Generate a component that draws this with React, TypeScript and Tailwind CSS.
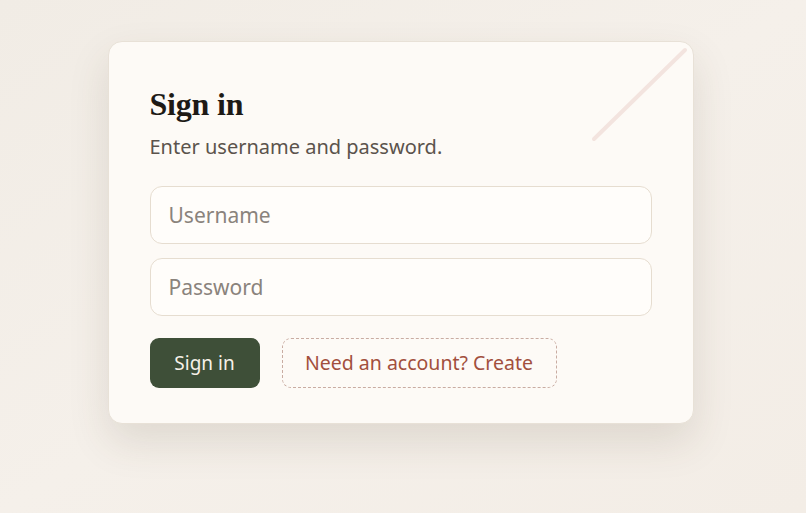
export default function App() {
  return (
    <div className="min-h-[513px] w-full bg-gradient-to-br from-[#f1ece5] via-[#f5f0ea] to-[#f3ede6] flex justify-center pt-[41px] pr-[5px] font-['Noto_Sans',sans-serif]">
      <div className="relative w-[586px] shrink-0 h-[383px] bg-[#fdfaf6] border border-[#e8e1d7] rounded-[14px] shadow-[0_18px_40px_rgba(80,60,40,0.13)] px-[41px] pt-[42px] overflow-hidden">
        <svg
          className="absolute right-[3px] top-[4px] pointer-events-none"
          width="100"
          height="100"
          viewBox="0 0 100 100"
        >
          <line x1="4" y1="93" x2="95" y2="4" stroke="#f3e4df" strokeWidth="4" strokeLinecap="round" />
        </svg>
        <h1 className="font-['Liberation_Serif',serif] font-bold text-[32px] leading-[40px] text-[#1e1a16] tracking-[-0.2px]">
          Sign in
        </h1>
        <p className="mt-[9px] text-[20px] leading-[28px] text-[#5b534c]">Enter username and password.</p>
        <form className="mt-[25px] flex flex-col gap-[14px]" onSubmit={(e) => e.preventDefault()}>
          <input
            type="text"
            placeholder="Username"
            className="h-[58px] w-full rounded-[12px] border border-[#e6ddd0] bg-[#fffdfa] px-[18px] text-[21px] text-[#2a2420] placeholder:text-[#8a837c] outline-none"
          />
          <input
            type="password"
            placeholder="Password"
            className="h-[58px] w-full rounded-[12px] border border-[#e6ddd0] bg-[#fffdfa] px-[18px] text-[21px] text-[#2a2420] placeholder:text-[#8a837c] outline-none"
          />
          <div className="mt-[8px] flex items-center gap-[22px]">
            <button
              type="submit"
              className="h-[50px] w-[110px] rounded-[9px] bg-[#3e4f38] text-[#f6f1e8] text-[19px]"
            >
              Sign in
            </button>
            <button
              type="button"
              className="h-[50px] w-[275px] rounded-[9px] border border-dashed border-[#c9aca2] text-[#a24f3d] text-[19.5px]"
            >
              Need an account? Create
            </button>
          </div>
        </form>
      </div>
    </div>
  );
}
